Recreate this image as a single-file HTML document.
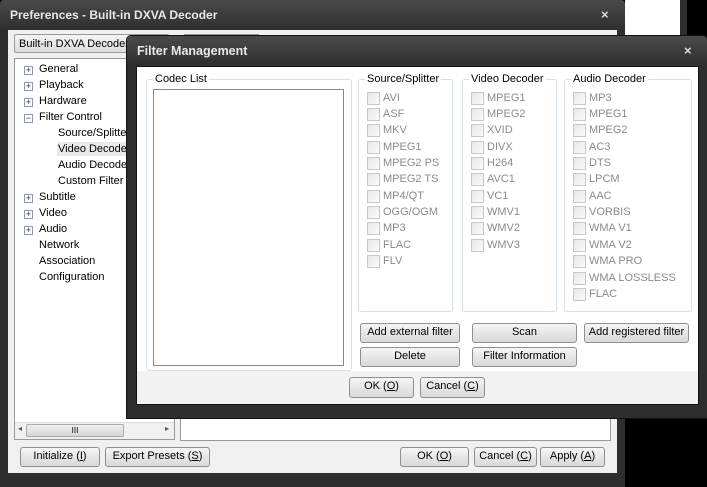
<!DOCTYPE html><html><head><style>
*{box-sizing:border-box}
body{margin:0;width:707px;height:487px;background:#000;position:relative;overflow:hidden;font-family:"Liberation Sans",sans-serif;font-size:11px;color:#000}
.a{position:absolute}
.win{background:linear-gradient(#4a4a4a,#2e2e2e 30px,#2e2e2e)}
.title{color:#e8e8e8;font-weight:bold;font-size:12px}
.btn{position:absolute;border:1px solid #8e8f8f;border-radius:3px;background:linear-gradient(#f6f6f6,#e6e6e6 50%,#d9d9d9);text-align:center;font-size:11px;line-height:17px}
.grp{position:absolute;border:1px solid #d5dfe5;border-radius:3px}
.gl{position:absolute;top:-7px;left:6px;background:#fff;padding:0 2px;font-size:11px}
.cb{position:absolute;left:8px;color:#8a8a8a;font-size:11px;white-space:nowrap;line-height:13px}
.cb i{display:inline-block;width:13px;height:13px;border:1px solid #c8c8c8;background:linear-gradient(135deg,#e6e6e6,#fbfbfb);vertical-align:top;margin-right:3px}
.tree div{position:absolute;white-space:nowrap;font-size:11px}
.pl{display:inline-block;width:9px;height:9px;border:1px solid #8a9ab0;font-size:9px;line-height:7px;text-align:center;color:#234;margin-right:6px;vertical-align:-1px;background:#fff}
</style></head><body>
<div class="a" style="left:625px;top:0;width:55px;height:36px;background:#fff"></div>
<div class="a" style="left:680px;top:0;width:7px;height:36px;background:#2e2e2e"></div>
<div class="a win" style="left:0;top:0;width:625px;height:487px;border-radius:4px 4px 0 0"></div>
<div class="a title" style="left:10px;top:8px">Preferences - Built-in DXVA Decoder</div>
<div class="a" style="left:601px;top:7px;color:#ddd;font-weight:bold;font-size:13px">×</div>
<div class="a" style="left:8px;top:30px;width:609px;height:443px;background:#f0f0f0"></div>
<div class="a" style="left:14px;top:34px;width:155px;height:19px;border:1px solid #999;border-radius:2px;background:linear-gradient(#f4f4f4,#dcdcdc);padding:3px 4px;font-size:11px">Built-in DXVA Decoder</div>
<div class="a" style="left:184px;top:34px;width:75px;height:19px;border:1px solid #999;background:#e8e8e8"></div>
<div class="a tree" style="left:14px;top:58px;width:161px;height:382px;background:#fff;border:1px solid #999">
<div style="left:9px;top:4px"><span class="pl">+</span>General</div>
<div style="left:9px;top:20px"><span class="pl">+</span>Playback</div>
<div style="left:9px;top:36px"><span class="pl">+</span>Hardware</div>
<div style="left:9px;top:52px"><span class="pl">−</span>Filter Control</div>
<div style="left:43px;top:68px">Source/Splitter</div>
<div style="left:42px;top:83px;background:#eaeaea;padding:1px">Video Decoder</div>
<div style="left:43px;top:100px">Audio Decoder</div>
<div style="left:43px;top:116px">Custom Filter M</div>
<div style="left:9px;top:132px"><span class="pl">+</span>Subtitle</div>
<div style="left:9px;top:148px"><span class="pl">+</span>Video</div>
<div style="left:9px;top:164px"><span class="pl">+</span>Audio</div>
<div style="left:24px;top:180px">Network</div>
<div style="left:24px;top:196px">Association</div>
<div style="left:24px;top:212px">Configuration</div>
<div style="left:0;top:363px;width:159px;height:17px;background:#f0f0f0;border-top:1px solid #ddd"></div>
<div style="left:11px;top:365px;width:98px;height:13px;border:1px solid #aaa;border-radius:2px;background:linear-gradient(#eee,#d6d6d6);text-align:center;font-size:8px;line-height:11px">III</div>
<div style="left:3px;top:365px;font-size:8px;color:#555">◂</div>
<div style="left:150px;top:365px;font-size:8px;color:#555">▸</div>
</div>
<div class="a" style="left:180px;top:400px;width:431px;height:41px;background:#fff;border:1px solid #999"></div>
<div class="btn" style="left:20px;top:447px;width:80px;height:20px">Initialize (<u>I</u>)</div>
<div class="btn" style="left:105px;top:447px;width:105px;height:20px">Export Presets (<u>S</u>)</div>
<div class="btn" style="left:400px;top:447px;width:69px;height:20px">OK (<u>O</u>)</div>
<div class="btn" style="left:474px;top:447px;width:63px;height:20px">Cancel (<u>C</u>)</div>
<div class="btn" style="left:540px;top:447px;width:65px;height:20px">Apply (<u>A</u>)</div>
<div class="a win" style="left:127px;top:36px;width:580px;height:382px;border-radius:4px 4px 0 0;box-shadow:0 0 0 1px #111"></div>
<div class="a title" style="left:137px;top:44px;font-size:12.5px">Filter Management</div>
<div class="a" style="left:684px;top:43px;color:#ddd;font-weight:bold;font-size:13px">×</div>
<div class="a" style="left:136px;top:66px;width:563px;height:339px;background:#fff;border:1px solid #111"></div>
<div class="a" style="left:137px;top:371px;width:561px;height:33px;background:#f2f2f2"></div>
<div class="grp" style="left:146px;top:79px;width:206px;height:292px"><span class="gl">Codec List</span>
<div class="a" style="left:6px;top:9px;width:191px;height:277px;border:1px solid #888"></div></div>
<div class="grp" style="left:358px;top:79px;width:95px;height:233px"><span class="gl">Source/Splitter</span>
<div class="cb" style="top:12px"><i></i>AVI</div><div class="cb" style="top:28px"><i></i>ASF</div><div class="cb" style="top:44px"><i></i>MKV</div><div class="cb" style="top:61px"><i></i>MPEG1</div><div class="cb" style="top:77px"><i></i>MPEG2 PS</div><div class="cb" style="top:93px"><i></i>MPEG2 TS</div><div class="cb" style="top:110px"><i></i>MP4/QT</div><div class="cb" style="top:126px"><i></i>OGG/OGM</div><div class="cb" style="top:142px"><i></i>MP3</div><div class="cb" style="top:159px"><i></i>FLAC</div><div class="cb" style="top:175px"><i></i>FLV</div></div>
<div class="grp" style="left:462px;top:79px;width:95px;height:233px"><span class="gl">Video Decoder</span>
<div class="cb" style="top:12px"><i></i>MPEG1</div><div class="cb" style="top:28px"><i></i>MPEG2</div><div class="cb" style="top:44px"><i></i>XVID</div><div class="cb" style="top:61px"><i></i>DIVX</div><div class="cb" style="top:77px"><i></i>H264</div><div class="cb" style="top:93px"><i></i>AVC1</div><div class="cb" style="top:110px"><i></i>VC1</div><div class="cb" style="top:126px"><i></i>WMV1</div><div class="cb" style="top:142px"><i></i>WMV2</div><div class="cb" style="top:159px"><i></i>WMV3</div></div>
<div class="grp" style="left:564px;top:79px;width:128px;height:233px"><span class="gl">Audio Decoder</span>
<div class="cb" style="top:12px"><i></i>MP3</div><div class="cb" style="top:28px"><i></i>MPEG1</div><div class="cb" style="top:44px"><i></i>MPEG2</div><div class="cb" style="top:61px"><i></i>AC3</div><div class="cb" style="top:77px"><i></i>DTS</div><div class="cb" style="top:93px"><i></i>LPCM</div><div class="cb" style="top:110px"><i></i>AAC</div><div class="cb" style="top:126px"><i></i>VORBIS</div><div class="cb" style="top:142px"><i></i>WMA V1</div><div class="cb" style="top:159px"><i></i>WMA V2</div><div class="cb" style="top:175px"><i></i>WMA PRO</div><div class="cb" style="top:192px"><i></i>WMA LOSSLESS</div><div class="cb" style="top:208px"><i></i>FLAC</div></div>
<div class="btn" style="left:360px;top:323px;width:100px;height:20px">Add external filter</div>
<div class="btn" style="left:472px;top:323px;width:105px;height:20px">Scan</div>
<div class="btn" style="left:584px;top:323px;width:105px;height:20px">Add registered filter</div>
<div class="btn" style="left:360px;top:347px;width:100px;height:20px">Delete</div>
<div class="btn" style="left:472px;top:347px;width:105px;height:20px">Filter Information</div>
<div class="btn" style="left:349px;top:377px;width:65px;height:21px">OK (<u>O</u>)</div>
<div class="btn" style="left:420px;top:377px;width:65px;height:21px">Cancel (<u>C</u>)</div>
</body></html>
